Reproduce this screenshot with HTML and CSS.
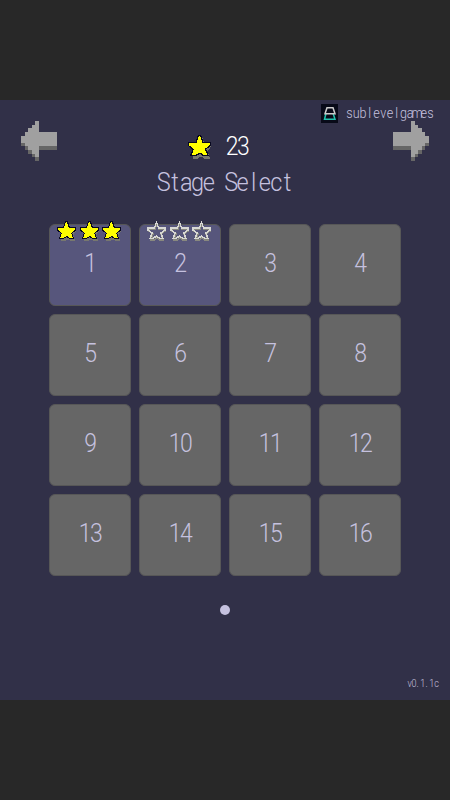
FILE: index.html
```
<!DOCTYPE html>
<html lang="en">
<head>
    <meta charset="UTF-8">
    <title>Stage Select</title>
    <meta name="viewport" content="width=device-width,initial-scale=1">
    <link rel="stylesheet" href="styles.css">
</head>
<body>
    <!-- shared sprites -->
    <svg class="sprites" width="0" height="0">
        <symbol id="arrow" viewBox="0 0 10 11">
            <path fill="#666" d="M4 1h1v3h5v4H5v3H4v-1H3V9H2V8H1V7H0V5h1V4h1V3h1V2h1z"/>
            <path fill="#a0a0a0" d="M4 0h1v3h5v4H5v3H4V9H3V8H2V7H1V6H0V4h1V3h1V2h1V1h1z"/>
        </symbol>
        <symbol id="star" viewBox="0 0 20 20">
            <path fill="#77776f" stroke="#77776f" stroke-width="2" d="M11 3l2 5h5v2l-3 4 2 5h-3l-3-2-3 2H5l1-5-3-4V8h6z"/>
            <path fill="#ff0" stroke="#080820" stroke-width="2" paint-order="stroke" d="M9 1h1l2 6h6v2l-4 3 2 5h-3l-3-2-4 2H3l2-5-4-3V7h6z"/>
        </symbol>
        <symbol id="star-empty" viewBox="0 0 20 20">
            <path fill="none" stroke="#88887f" stroke-width="1.500" d="M10 3l2 5h6v2l-4 3 2 6h-3l-3-2-3 2H4l2-6-4-3V8h6z"/>
            <path fill="none" stroke="#d8d8d4" stroke-width="1.500" d="M9.500 1l2 6H18v2l-4 3 2 5.500h-3L9.500 15 6 17.500H3l2-5.500-4-3V7h6.500z"/>
        </symbol>
    </svg>

    <div class="game">
        <div class="header">
            <button type="button" class="arrow-btn"><svg><use href="#arrow"/></svg></button>
            <div class="total">
                <svg class="total-star"><use href="#star"/></svg>
                <span class="num">23</span>
            </div>
            <button type="button" class="arrow-btn next"><svg><use href="#arrow"/></svg></button>
            <a class="brand">
                <svg class="brand-logo" viewBox="0 0 17 19">
                    <path fill="#080a18" d="M0 0h17v19H0z"/>
                    <path fill="none" stroke="#20c4b0" stroke-width="1.500" d="M5 9.500L3.500 15.300h10.500l-2-6"/>
                    <path fill="none" stroke="#ccc" stroke-width="1.500" d="M6 3.700h6l2 6H4z"/>
                </svg>
                <svg class="brand-name" viewBox="0 0 88 18">
                    <text transform="scale(.9 1)" y="13.500" x="3.900 11.400 18.900 26.400 33.900 41.400 48.900 56.400 63.900 71.400 78.900 86.400 93.900">sublevelgames</text>
                </svg>
            </a>
        </div>

        <svg class="title" viewBox="0 0 144 30">
            <text transform="scale(.94 1)" y="22" x="11.400 23.400 35.400 47.300 59.300 71.300 83.200 95.200 107.200 119.100 131.100 143.100">Stage Select</text>
        </svg>

        <div class="stages">
            <div class="stage open">
                <div class="stars"><svg><use href="#star"/></svg><svg><use href="#star"/></svg><svg><use href="#star"/></svg></div>
                <span class="num">1</span>
            </div>
            <div class="stage open">
                <div class="stars"><svg><use href="#star-empty"/></svg><svg><use href="#star-empty"/></svg><svg><use href="#star-empty"/></svg></div>
                <span class="num">2</span>
            </div>
            <div class="stage"><span class="num">3</span></div>
            <div class="stage"><span class="num">4</span></div>
            <div class="stage"><span class="num">5</span></div>
            <div class="stage"><span class="num">6</span></div>
            <div class="stage"><span class="num">7</span></div>
            <div class="stage"><span class="num">8</span></div>
            <div class="stage"><span class="num">9</span></div>
            <div class="stage"><span class="num">10</span></div>
            <div class="stage"><span class="num">11</span></div>
            <div class="stage"><span class="num">12</span></div>
            <div class="stage"><span class="num">13</span></div>
            <div class="stage"><span class="num">14</span></div>
            <div class="stage"><span class="num">15</span></div>
            <div class="stage"><span class="num">16</span></div>
        </div>

        <div class="pager"><span class="dot"></span></div>
        <svg class="version" viewBox="0 0 36 14">
            <text transform="scale(.9 1)" y="10" x="4 9 13 18.500 23 28.500 34">v0.1.1c</text>
        </svg>
    </div>
</body>
</html>
```
FILE: styles.css
```
html, body {margin:0;height:100%;}
body {display:flex;flex-direction:column;justify-content:center;align-items:center;background:#282828;color:#c5c1df;font-family:Roboto, "Liberation Sans", sans-serif;font-weight:300;}
svg {display:block;}
text {fill:#c5c1df;text-anchor:middle;}
.sprites {position:absolute;}

.game {display:flex;flex-direction:column;box-sizing:border-box;width:450px;height:600px;background:#313048;}

.header {position:relative;display:flex;justify-content:space-between;padding:21px 21px 0;height:48px;}
.arrow-btn {padding:0;border:0;background:none;width:36px;height:40px;}
.arrow-btn svg {width:36px;height:40px;shape-rendering:crispEdges;}
.arrow-btn.next {transform:scaleX(-1);}
.total {display:flex;align-items:center;gap:12px;height:50px;margin-right:13px;}
.total-star {width:24px;height:25px;margin-top:1px;shape-rendering:crispEdges;}
.total .num {margin-top:1px;color:#fff;}

.brand {position:absolute;top:4px;right:16px;display:flex;align-items:center;gap:8px;}
.brand-logo {width:17px;height:19px;}
.brand-name {width:88px;height:18px;font-size:14px;}

.title {align-self:center;width:144px;height:30px;font-size:25px;}

.num {display:inline-block;font-size:25px;line-height:30px;letter-spacing:-1.800px;text-indent:.9px;transform:scaleX(.92);}

.stages {display:grid;grid-template-columns:repeat(4, 82px);grid-auto-rows:82px;gap:8px;justify-content:center;margin-top:25px;}
.stage {position:relative;display:flex;justify-content:center;box-sizing:border-box;padding-top:24px;border:1px solid #575757;border-radius:6px;background:#666;}
.stage.open {background:#57567c;}
.stage .num {margin-right:1px;}
.stars {position:absolute;top:-4px;left:7px;display:flex;gap:2.500px;}
.stars svg {width:20px;height:20px;shape-rendering:crispEdges;}

.pager {display:flex;justify-content:center;margin-top:29px;}
.dot {width:10px;height:10px;border-radius:50%;background:#c5c1df;}

.version {align-self:flex-end;width:36px;height:14px;margin:auto 8px 9px 0;font-size:10px;}
.version text {fill:#c5c1df;}
```
